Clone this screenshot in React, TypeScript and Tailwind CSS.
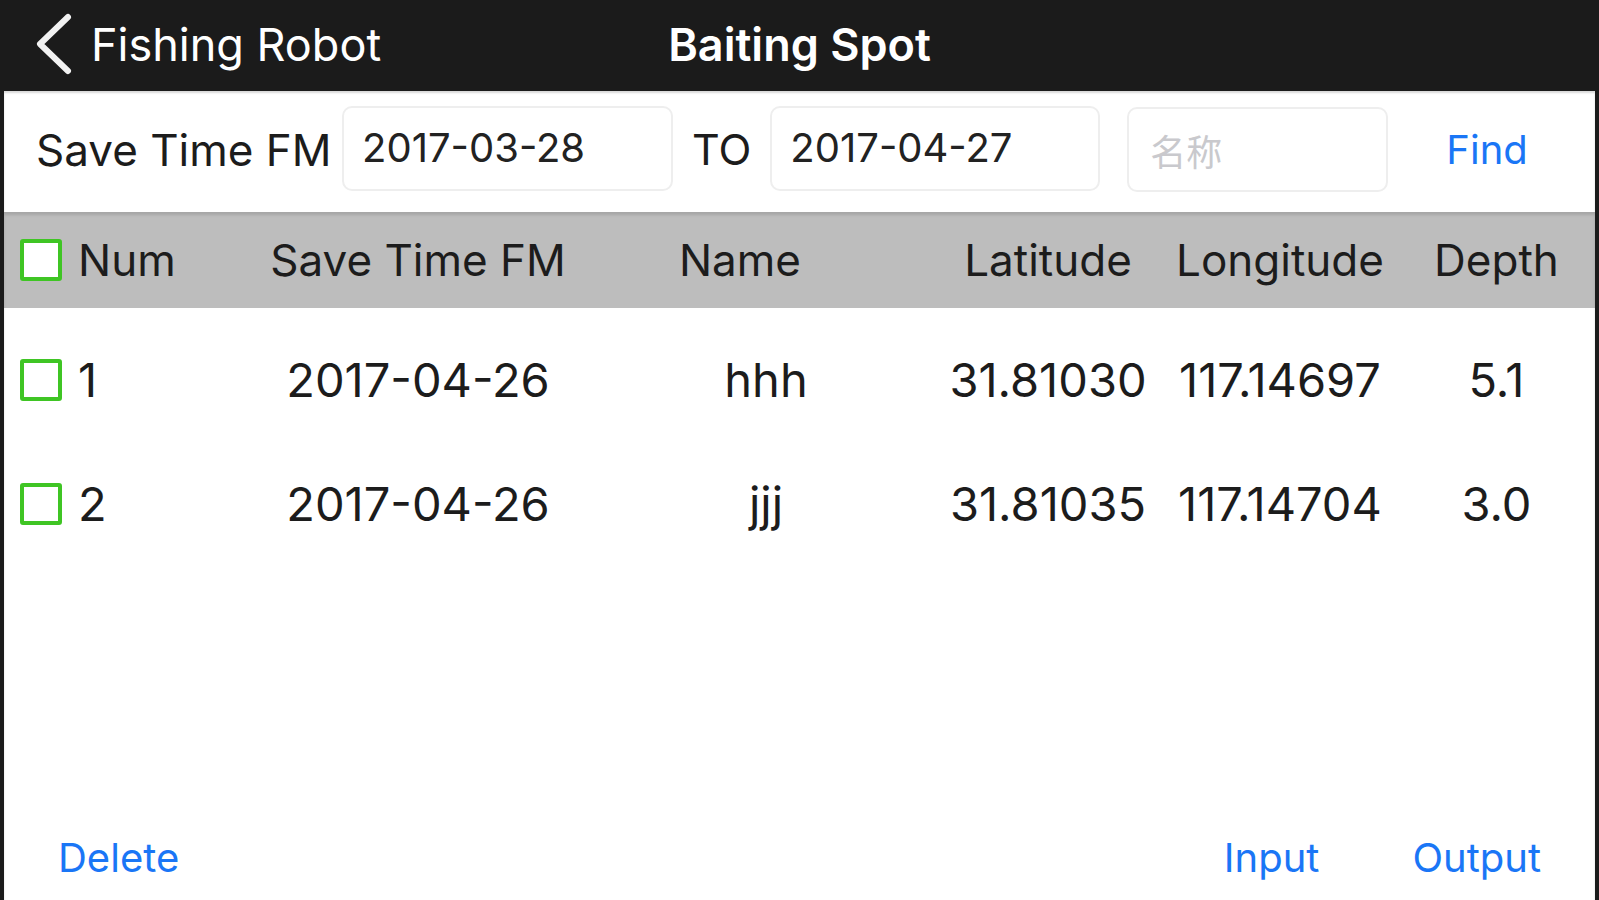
import React from 'react';

type Spot = {
    num: number;
    date: string;
    name: string;
    lat: string;
    lng: string;
    depth: string;
}

const spots: Spot[] = [
    { num: 1, date: '2017-04-26', name: 'hhh', lat: '31.81030', lng: '117.14697', depth: '5.1' },
    { num: 2, date: '2017-04-26', name: 'jjj', lat: '31.81035', lng: '117.14704', depth: '3.0' },
];

const cols = 'grid grid-cols-[224px_380px_316px_248px_216px_1fr] items-center';

function Check() {
    return <div className="w-[42px] h-[42px] shrink-0 rounded-[3px] border-[4px] border-[#3fc524] bg-white" />
}

function App() {
    return (
        <div className="h-[900px] w-full flex flex-col bg-[#1b1b1b] text-[#1c1c1c] font-['Inter','Liberation_Sans',sans-serif]">
            {/* nav bar */}
            <div className="h-[91px] shrink-0 grid grid-cols-[1fr_auto_1fr] items-center text-white">
                <div className="flex items-center pl-[34px] -mt-[3px]">
                    <svg width="40" height="64" viewBox="0 0 40 64" fill="none">
                        <path d="M34 5 L6 32 L34 59" stroke="#f2f2f2" strokeWidth="6" strokeLinecap="round" strokeLinejoin="round" />
                    </svg>
                    <span className="ml-[17px] text-[45px] leading-none">Fishing Robot</span>
                </div>
                <div className="text-[45px] font-semibold leading-none -mt-[3px]">Baiting Spot</div>
                <div />
            </div>

            <div className="flex-1 mx-[4px] bg-white flex flex-col shadow-[inset_0_2px_2px_rgba(0,0,0,0.15)]">
                {/* search row */}
                <div className="h-[121px] shrink-0 flex items-center pl-[32px]">
                    <span className="text-[44px] leading-none w-[306px] -mt-[4px]">Save Time FM</span>
                    <div className="w-[331px] h-[85px] rounded-[10px] border-2 border-[#eeeeee] flex items-center pl-[18px] text-[40px] text-[#222] -mt-[7px]">2017-03-28</div>
                    <span className="ml-[19px] text-[43px] leading-none -mt-[4px]">TO</span>
                    <div className="ml-[19px] w-[330px] h-[85px] rounded-[10px] border-2 border-[#eeeeee] flex items-center pl-[18px] text-[40px] text-[#222] -mt-[7px]">2017-04-27</div>
                    <div className="ml-[27px] w-[261px] h-[85px] rounded-[10px] border-2 border-[#eeeeee] flex items-center pl-[21px] text-[36px] text-[#c9c9cd] -mt-[4px] font-['Noto_Sans_CJK_SC',sans-serif]">名称</div>
                    <span className="ml-[58px] text-[40px] leading-none text-[#1a76f6] -mt-[4px]">Find</span>
                </div>

                {/* table header */}
                <div className={`${cols} h-[96px] shrink-0 bg-[#bdbdbd] text-[44px] shadow-[inset_0_3px_3px_rgba(0,0,0,0.12)]`}>
                    <div className="flex items-center pl-[16px] gap-[16px]">
                        <Check />
                        <span>Num</span>
                    </div>
                    <div className="text-center">Save Time FM</div>
                    <div className="text-center pr-[52px]">Name</div>
                    <div className="text-center">Latitude</div>
                    <div className="text-center">Longitude</div>
                    <div className="text-center pl-[10px]">Depth</div>
                </div>

                {/* rows */}
                <div className="pt-[10px] text-[47px]">
                    {spots.map(s => (
                        <div key={s.num} className={`${cols} h-[124px]`}>
                            <div className="flex items-center pl-[16px] gap-[16px]">
                                <Check />
                                <span>{s.num}</span>
                            </div>
                            <div className="text-center">{s.date}</div>
                            <div className="text-center">{s.name}</div>
                            <div className="text-center">{s.lat}</div>
                            <div className="text-center">{s.lng}</div>
                            <div className="text-center pl-[10px]">{s.depth}</div>
                        </div>
                    ))}
                </div>

                {/* bottom actions */}
                <div className="mt-auto h-[92px] flex items-center px-[54px] pt-[8px] text-[40px] text-[#1a76f6]">
                    <span>Delete</span>
                    <span className="ml-auto">Input</span>
                    <span className="ml-[93px]">Output</span>
                </div>
            </div>
        </div>
    )
}

export default App
